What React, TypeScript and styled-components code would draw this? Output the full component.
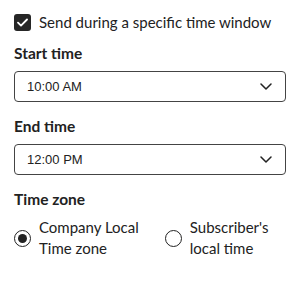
import React, { useState } from "react"
import styled, { createGlobalStyle } from "styled-components"

const GlobalStyle = createGlobalStyle`
  body {
    margin: 0;
    background: #ffffff;
    font-family: "Lato", "Noto Sans", sans-serif;
    color: #222222;
  }
`

const Panel = styled.div`
  width: 272px;
  padding: 12px 0 0 14px;
  display: flex;
  flex-direction: column;
`

const CheckRow = styled.label`
  display: flex;
  align-items: center;
  gap: 8px;
  font-size: 15px;
  line-height: 20px;
  color: #222;
`

const CheckBox = styled.span`
  width: 17px;
  height: 17px;
  border-radius: 3px;
  background: #262626;
  display: flex;
  align-items: center;
  justify-content: center;
  flex-shrink: 0;
`

const Label = styled.div<{ $top: number }>`
  margin-top: ${(p) => p.$top}px;
  font-size: 15.5px;
  font-weight: 700;
  line-height: 18px;
  color: #222;
`

const Select = styled.div`
  margin-top: 9px;
  height: 31px;
  box-sizing: border-box;
  border: 1px solid #444;
  border-radius: 4px;
  display: flex;
  align-items: center;
  justify-content: space-between;
  padding: 0 13px 0 12px;
  font-family: "Liberation Sans", Arial, sans-serif;
  font-size: 13px;
  color: #222;
`

const RadioGroup = styled.div`
  margin-top: 9px;
  display: flex;
  gap: 26px;
`

const RadioOption = styled.label`
  display: flex;
  align-items: center;
  gap: 8px;
  font-size: 15px;
  line-height: 21px;
  color: #222;
`

const RadioCircle = styled.span<{ $checked: boolean }>`
  width: 17px;
  height: 17px;
  box-sizing: border-box;
  border-radius: 50%;
  border: 1.5px solid #222;
  display: flex;
  align-items: center;
  justify-content: center;
  flex-shrink: 0;

  &::after {
    content: "";
    width: 9px;
    height: 9px;
    border-radius: 50%;
    background: #222;
    display: ${(p) => (p.$checked ? "block" : "none")};
  }
`

const Chevron = () => (
  <svg width="12" height="7" viewBox="0 0 12 7" fill="none">
    <path d="M1 1l5 5 5-5" stroke="#222" strokeWidth="1.5" strokeLinecap="round" strokeLinejoin="round" />
  </svg>
)

export default function App() {
  const [zone, setZone] = useState("company")
  return (
    <>
      <GlobalStyle />
      <Panel>
        <CheckRow>
          <CheckBox>
            <svg width="11" height="9" viewBox="0 0 11 9" fill="none">
              <path d="M1 4.6l3 3L10 1.5" stroke="#fff" strokeWidth="1.8" strokeLinecap="round" strokeLinejoin="round" />
            </svg>
          </CheckBox>
          Send during a specific time window
        </CheckRow>

        <Label $top={12}>Start time</Label>
        <Select>
          10:00 AM
          <Chevron />
        </Select>

        <Label $top={15}>End time</Label>
        <Select>
          12:00 PM
          <Chevron />
        </Select>

        <Label $top={15}>Time zone</Label>
        <RadioGroup>
          <RadioOption onClick={() => setZone("company")}>
            <RadioCircle $checked={zone === "company"} />
            <span>
              Company Local
              <br />
              Time zone
            </span>
          </RadioOption>
          <RadioOption onClick={() => setZone("subscriber")}>
            <RadioCircle $checked={zone === "subscriber"} />
            <span>
              Subscriber's
              <br />
              local time
            </span>
          </RadioOption>
        </RadioGroup>
      </Panel>
    </>
  )
}
